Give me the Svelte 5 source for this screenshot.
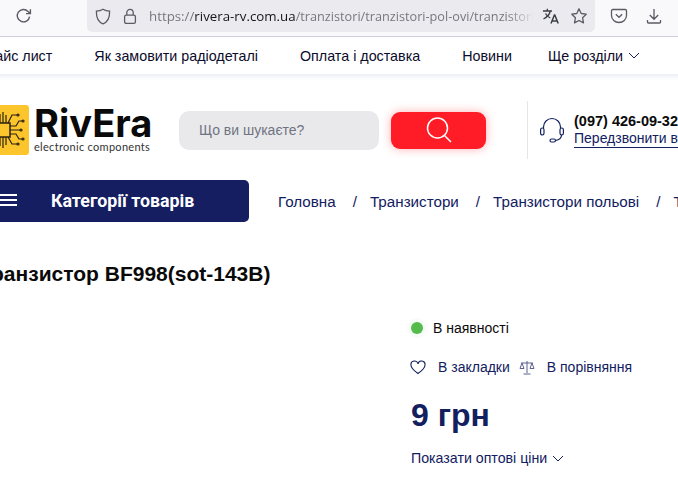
<script lang="ts">
  const navLinks = ['Прайс лист', 'Як замовити радіодеталі', 'Оплата і доставка', 'Новини']
  const crumbs = ['Головна', 'Транзистори', 'Транзистори польові', 'Транзистори']
</script>

<div class="page">
  <div class="browser">
    <svg class="reload" width="18" height="18" viewBox="0 0 18 18" fill="none" stroke="#5b5b66" stroke-width="1.4">
      <path d="M14.6 9.6A6.2 6.2 0 1 1 13 4.4L15 6.2" />
      <path d="M15.4 2.2v4.4H11" fill="none" />
    </svg>
    <div class="urlbar">
      <svg width="16" height="17" viewBox="0 0 16 17" fill="none" stroke="#5b5b66" stroke-width="1.3">
        <path d="M8 1.2c2 1.2 4 1.8 6.6 2 .2 6-1.6 10.600-6.600 12.600C3 13.800 1.200 9.200 1.400 3.200 4 3 6 2.400 8 1.200z" />
      </svg>
      <svg class="lock" width="14" height="17" viewBox="0 0 14 17" fill="none" stroke="#5b5b66" stroke-width="1.3">
        <rect x="1.600" y="7.200" width="10.800" height="8.200" rx="1.600" />
        <path d="M3.800 7V4.600a3.200 3.200 0 0 1 6.400 0V7" />
      </svg>
      <span class="url"><span class="dim">https://</span>rivera-rv.com.ua<span class="dim path">/tranzistori/tranzistori-pol-ovi/tranzistori-polovi-bf998</span></span>
      <svg class="translate" width="18" height="18" viewBox="0 0 18 18" fill="none" stroke="#3c3c44" stroke-width="1.300">
        <path d="M1 4h9M5.300 1.800V4M8.300 4c-.6 3-2.800 6-6.800 8M3.500 6.500c1 2 2.800 3.500 4.800 4.500" />
        <path d="M9 16.500l3.400-8.500h.4l3.400 8.500M10.200 14h5" stroke-width="1.500" />
      </svg>
      <svg class="star" width="18" height="18" viewBox="0 0 18 18" fill="none" stroke="#5b5b66" stroke-width="1.300">
        <path d="M9 1.800l2.200 4.700 5 .7-3.600 3.600.9 5.100L9 13.500l-4.500 2.400.9-5.100L1.800 7.200l5-.7z" stroke-linejoin="round" />
      </svg>
    </div>
    <svg class="pocket" width="18" height="18" viewBox="0 0 18 18" fill="none" stroke="#5b5b66" stroke-width="1.300">
      <path d="M2.800 2.500h12.400c.8 0 1.300.5 1.300 1.300v4.700c0 4-3.400 7-7.500 7s-7.500-3-7.500-7V3.800c0-.8.500-1.300 1.300-1.300z" />
      <path d="M5.800 7.200L9 10.300l3.200-3.100" />
    </svg>
    <svg class="download" width="18" height="18" viewBox="0 0 18 18" fill="none" stroke="#5b5b66" stroke-width="1.300">
      <path d="M9 2v10M4.800 8L9 12.300 13.200 8M2.500 13v2.200c0 .5.300.8.800.8h11.400c.5 0 .8-.3.800-.8V13" />
    </svg>
  </div>

  <nav class="topnav">
    {#each navLinks as link}
      <a href="#top">{link}</a>
    {/each}
    <a href="#top" class="more">
      Ще розділи
      <svg width="12" height="7" viewBox="0 0 12 7" fill="none" stroke="#12205f" stroke-width="1">
        <path d="M1 1l5 5 5-5" />
      </svg>
    </a>
  </nav>

  <header class="header">
    <div class="logo-mark">
      <svg width="30" height="50" viewBox="0 0 30 50" fill="none" stroke="#2a2212" stroke-width="1.200">
        <rect x="-4" y="18" width="14" height="14" stroke-width="1.500" />
        <path d="M0 18V9M3 18V7M6 18V10M0 32v9M3 32v11M6 32v8M10 21h6l3-5h3M10 25h10M10 29h6l3 5h3M8 18l4-8h5M8 32l4 7h5" />
        <circle cx="23" cy="16" r="1" />
        <circle cx="21" cy="25" r="1" />
        <circle cx="23" cy="34" r="1" />
        <circle cx="18" cy="10" r="1" />
        <circle cx="18" cy="39" r="1" />
      </svg>
    </div>
    <div class="logo-text">
      <span class="logo-name">RivEra</span>
      <span class="logo-sub">electronic components</span>
    </div>
    <div class="search">Що ви шукаєте?</div>
    <button class="search-btn" aria-label="Пошук">
      <svg width="28" height="28" viewBox="0 0 28 28" fill="none" stroke="#fff" stroke-width="1.500">
        <circle cx="12.500" cy="12" r="10" />
        <path d="M19.500 19.500l6.500 6.500" />
      </svg>
    </button>
    <div class="divider"></div>
    <svg class="headset" width="24" height="26" viewBox="0 0 24 26" fill="none" stroke="#12205f" stroke-width="1.200">
      <path d="M3.500 11V10a8.500 8.500 0 0 1 17 0v1" />
      <rect x="0.600" y="11" width="3.400" height="7" rx="1.700" />
      <rect x="20" y="11" width="3.400" height="7" rx="1.700" />
      <path d="M21.500 18c0 3-3 5-6 5.500" />
      <rect x="10" y="22" width="5.500" height="3" rx="1.500" />
    </svg>
    <div class="contact">
      <span class="phone">(097) 426-09-32</span>
      <a href="#top" class="callback">Передзвонити вам</a>
    </div>
  </header>

  <div class="catbar">
    <div class="catbtn">
      <span class="burger"><i></i><i></i><i></i></span>
      <span>Категорії товарів</span>
    </div>
    <div class="crumbs">
      {#each crumbs as crumb, i}
        {#if i > 0}<span class="sep">/</span>{/if}
        <a href="#top">{crumb}</a>
      {/each}
    </div>
  </div>

  <h1>Транзистор BF998(sot-143B)</h1>

  <section class="product">
    <div class="stock"><span class="dot"></span>В наявності</div>
    <div class="actions">
      <svg class="heart" width="16" height="15" viewBox="0 0 16 15" fill="none" stroke="#12205f" stroke-width="1.100">
        <path d="M8 13.500C3 10 1 7.500 1 5a3.500 3.500 0 0 1 7-1 3.500 3.500 0 0 1 7 1c0 2.500-2 5-7 8.500z" />
      </svg>
      <span class="bookmark">В закладки</span>
      <svg class="scales" width="16" height="15" viewBox="0 0 16 15" fill="none" stroke="#5a6390" stroke-width="1">
        <path d="M8 1v12M4.500 14h7M2 3h12M3 3L1 8.500h4zM13 3l-2 5.500h4z" />
      </svg>
      <span class="compare">В порівняння</span>
    </div>
    <div class="price">9 грн</div>
    <a href="#top" class="wholesale">
      Показати оптові ціни
      <svg width="12" height="7" viewBox="0 0 12 7" fill="none" stroke="#12205f" stroke-width="1">
        <path d="M1 1l5 5 5-5" />
      </svg>
    </a>
  </section>
</div>

<style>
  :global(body) {
    margin: 0;
    background: #fff;
    overflow: hidden;
  }

  .page {
    width: 678px;
    height: 483px;
    overflow: hidden;
    font-family: "Liberation Sans", Arial, sans-serif;
    color: #12205f;
  }

  a {
    color: inherit;
    text-decoration: none;
  }

  .browser {
    display: flex;
    align-items: flex-start;
    height: 36px;
    background: #f9f9fb;
    border-bottom: 1px solid #cfcfd8;
  }

  .browser > svg {
    flex: none;
    margin-top: 7px;
  }

  .reload {
    margin-left: 15px;
  }

  .urlbar {
    flex: none;
    display: flex;
    align-items: center;
    width: 508px;
    height: 32px;
    margin-left: 54px;
    padding-left: 8px;
    box-sizing: border-box;
    background: #ebebef;
    border-radius: 0 0 5px 5px;
  }

  .urlbar svg {
    flex: none;
  }

  .lock {
    margin-left: 12px;
  }

  .url {
    flex: 1;
    min-width: 0;
    margin-left: 12px;
    font: 13.300px "Open Sans", sans-serif;
    color: #15141a;
    white-space: nowrap;
    overflow: hidden;
    -webkit-mask-image: linear-gradient(90deg, #000 93%, transparent);
    mask-image: linear-gradient(90deg, #000 93%, transparent);
  }

  .dim {
    color: #77777e;
  }

  .path {
    font-size: 12.700px;
  }

  .translate {
    margin-left: 8px;
  }

  .star {
    margin-left: 10px;
    margin-right: 7px;
  }

  .browser > .pocket {
    margin-left: 15px;
  }

  .browser > .download {
    margin-left: 17px;
  }

  .topnav {
    position: relative;
    display: flex;
    align-items: center;
    gap: 42px;
    height: 37px;
    margin-left: -23px;
    box-sizing: border-box;
    font-size: 14.300px;
    color: #0b0b2b;
    white-space: nowrap;
    background: #fff;
  }

  .topnav::before {
    content: '';
    position: absolute;
    left: 0;
    width: 720px;
    top: 37px;
    height: 6px;
    background: linear-gradient(#eceef4, #fff);
  }

  .more {
    display: flex;
    align-items: center;
    gap: 5px;
    margin-left: -6px;
  }

  .header {
    display: flex;
    align-items: center;
    height: 62px;
    margin-top: 25px;
  }

  .logo-mark {
    flex: none;
    width: 29px;
    height: 50px;
    background: #fdc52c;
    border-radius: 0 3px 3px 0;
    overflow: hidden;
  }

  .logo-mark svg {
    display: block;
  }

  .logo-text {
    flex: none;
    display: flex;
    flex-direction: column;
    width: 145px;
    margin-left: 5px;
    color: #0a0a0a;
  }

  .logo-name {
    font: 700 38px/33px Inter, sans-serif;
  }

  .logo-sub {
    font: 11px/13px Lato, sans-serif;
    color: #333;
    letter-spacing: .3px;
  }

  .search {
    flex: none;
    width: 200px;
    height: 39px;
    line-height: 39px;
    padding-left: 20px;
    box-sizing: border-box;
    background: #e9e9ec;
    border-radius: 10px;
    font-size: 14px;
    color: #6f7480;
  }

  .search-btn {
    flex: none;
    display: flex;
    align-items: center;
    justify-content: center;
    width: 95px;
    height: 37px;
    margin-left: 12px;
    padding: 0;
    border: 0;
    background: #ff1c26;
    border-radius: 9px;
    box-shadow: 0 0 10px rgba(255, 28, 38, .35);
  }

  .divider {
    flex: none;
    width: 1px;
    height: 58px;
    margin-left: 41px;
    background: #e6e6e8;
  }

  .headset {
    flex: none;
    margin-left: 12px;
  }

  .contact {
    flex: none;
    display: flex;
    flex-direction: column;
    margin-left: 10px;
    white-space: nowrap;
  }

  .phone {
    font-size: 14.500px;
    font-weight: 700;
    line-height: 18px;
    color: #0a0a0a;
  }

  .callback {
    font-size: 14px;
    line-height: 17px;
    border-bottom: 1px solid #12205f;
  }

  .catbar {
    display: flex;
    align-items: center;
    margin-top: 19px;
    height: 42px;
  }

  .catbtn {
    flex: none;
    display: flex;
    align-items: center;
    width: 249px;
    height: 42px;
    padding-bottom: 2px;
    box-sizing: border-box;
    background: #141e61;
    border-radius: 0 5px 5px 0;
    color: #fff;
    font: 700 17.800px Roboto, sans-serif;
  }

  .burger {
    display: flex;
    flex-direction: column;
    gap: 3px;
    width: 17px;
    margin-right: 34px;
  }

  .burger i {
    display: block;
    height: 2px;
    background: #fff;
  }

  .crumbs {
    flex: none;
    display: flex;
    align-items: center;
    margin-left: 29px;
    font-size: 15.200px;
    white-space: nowrap;
  }

  .sep {
    margin: 0 13px 0 17px;
  }

  h1 {
    margin: 40px 0 0 -21px;
    font-size: 21px;
    line-height: 24px;
    color: #0a0a0a;
    white-space: nowrap;
  }

  .product {
    margin: 31px 0 0 411px;
  }

  .stock {
    display: flex;
    align-items: center;
    height: 22px;
    font-size: 14px;
    color: #0a0a0a;
  }

  .dot {
    width: 12px;
    height: 12px;
    margin-right: 10px;
    border-radius: 50%;
    background: #55bb4d;
    box-shadow: 0 0 0 4px rgba(85, 187, 77, .05);
  }

  .actions {
    display: flex;
    align-items: center;
    height: 20px;
    margin-top: 18px;
    margin-left: -1px;
    font-size: 14px;
    white-space: nowrap;
  }

  .bookmark {
    margin-left: 12px;
  }

  .scales {
    margin-left: 9px;
  }

  .compare {
    margin-left: 12px;
  }

  .price {
    margin-top: 20px;
    font-size: 32px;
    font-weight: 700;
    line-height: 36px;
  }

  .wholesale {
    display: flex;
    align-items: center;
    gap: 5px;
    margin-top: 17px;
    font-size: 14.200px;
  }
</style>
